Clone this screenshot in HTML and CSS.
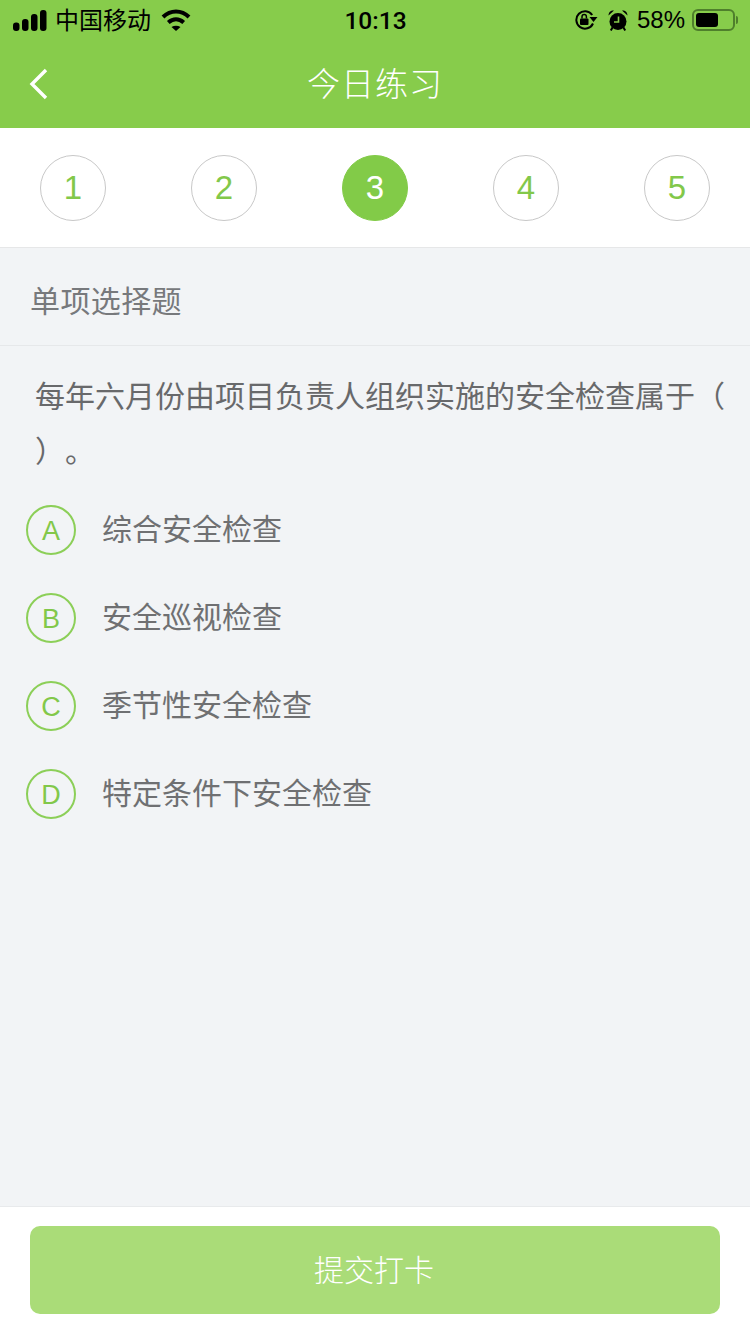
FILE: index.html
```html
<!DOCTYPE html>
<html lang="zh-CN">
<head>
  <meta charset="UTF-8">
  <meta name="viewport" content="width=device-width, initial-scale=1.0">
  <title>今日练习</title>
  <link rel="stylesheet" href="styles.css">
</head>
<body>
  <div class="page">
    <header class="top">
      <div class="status">
        <div class="status-left">
          <svg class="signal" width="34" height="21" viewBox="0 0 34 21">
            <rect x="0" y="12.500" width="6.500" height="8.500" rx="3"/>
            <rect x="9" y="9" width="6.500" height="12" rx="3"/>
            <rect x="18" y="4" width="6.500" height="17" rx="3"/>
            <rect x="27" y="0" width="6.500" height="21" rx="3"/>
          </svg>
          <span class="carrier">中国移动</span>
          <svg class="wifi" width="30" height="22" viewBox="0 0 30 22">
            <path d="M2 8C9.500 .7 20.500 .7 28 8" fill="none" stroke="#000" stroke-width="4"/>
            <path d="M7.300 13.500C12 9.300 18 9.300 22.700 13.500" fill="none" stroke="#000" stroke-width="4"/>
            <path d="M10.500 18c2.800-1.800 6.200-1.800 9 0l-4.500 4z"/>
          </svg>
        </div>
        <span class="time">10:13</span>
        <div class="status-right">
          <svg class="lock" width="23" height="20" viewBox="0 0 23 20">
            <path d="M17.200 5A8.700 8.700 0 1 0 18 13.500" fill="none" stroke="#000" stroke-width="2"/>
            <path d="M14.500 7h8l-4 5z"/>
            <rect x="5" y="8.500" width="8.500" height="6.500" rx="1"/>
            <path d="M7 8.500V6.800a2.200 2.200 0 0 1 4.400 0v1.700" fill="none" stroke="#000" stroke-width="1.500"/>
          </svg>
          <svg class="alarm" width="20" height="21" viewBox="0 0 20 21">
            <circle cx="10" cy="11.500" r="8.500"/>
            <path d="M.5 5.500C.5 2 3 .2 6 .5zM19.500 5.500C19.500 2 17 .2 14 .5z"/>
            <path d="M4.500 17.500 2.800 20.500M15.500 17.500 17.200 20.500" stroke="#000" stroke-width="2"/>
            <path d="M10.500 6.500v5.500H6" fill="none" stroke="#87cc4b" stroke-width="1.600"/>
          </svg>
          <span class="percent">58%</span>
          <div class="battery"><div class="battery-level"></div></div>
          <div class="battery-tip"></div>
        </div>
      </div>
      <nav class="nav">
        <svg class="back" width="20" height="32" viewBox="0 0 20 32">
          <path d="M17 2 3 16l14 14" fill="none" stroke="#fff" stroke-width="3.400"/>
        </svg>
        <h1 class="nav-title">今日练习</h1>
      </nav>
    </header>

    <div class="steps">
      <div class="step">1</div>
      <div class="step">2</div>
      <div class="step step-on">3</div>
      <div class="step">4</div>
      <div class="step">5</div>
    </div>

    <main class="content">
      <div class="kind">单项选择题</div>
      <p class="question">每年六月份由项目负责人组织实施的安全检查属于（ ）。</p>
      <ul class="options">
        <li class="option"><span class="letter">A</span><span class="option-text">综合安全检查</span></li>
        <li class="option"><span class="letter">B</span><span class="option-text">安全巡视检查</span></li>
        <li class="option"><span class="letter">C</span><span class="option-text">季节性安全检查</span></li>
        <li class="option"><span class="letter">D</span><span class="option-text">特定条件下安全检查</span></li>
      </ul>
    </main>

    <footer class="bottom">
      <button class="submit">提交打卡</button>
    </footer>
  </div>
</body>
</html>
```

FILE: styles.css
```css
* {
  box-sizing: border-box;
}

body {
  margin: 0;
  font-family: "Liberation Sans", "Noto Sans CJK SC", sans-serif;
  background-color: #f2f4f6;
}

.page {
  display: flex;
  flex-direction: column;
  width: 750px;
  height: 1334px;
  overflow: hidden;
}

.top {
  height: 128px;
  background-color: #87cc4b;
}

.status {
  display: grid;
  grid-template-columns: 1fr auto 1fr;
  align-items: center;
  height: 40px;
  padding: 0 12px 0 13px;
  color: #000;
}

.status-left,
.status-right {
  display: flex;
  align-items: center;
}

.status-right {
  justify-content: flex-end;
}

.signal {
  margin-right: 8px;
}

.carrier {
  margin-top: -3px;
  margin-right: 10px;
  font-size: 24px;
}

.time {
  font-family: Roboto, "Liberation Sans", sans-serif;
  font-size: 24.500px;
  font-weight: 500;
}

.lock {
  margin-right: 10px;
}

.alarm {
  margin-right: 9px;
}

.percent {
  margin-right: 7px;
  font-size: 24px;
}

.battery {
  width: 43px;
  height: 22px;
  padding: 2px;
  border: 2px solid #4f7f2c;
  border-radius: 6px;
}

.battery-level {
  width: 22px;
  height: 100%;
  background-color: #000;
  border-radius: 3px;
}

.battery-tip {
  width: 2px;
  height: 8px;
  margin-left: 1px;
  background-color: #4f7f2c;
  border-radius: 0 2px 2px 0;
}

.nav {
  position: relative;
  display: flex;
  justify-content: center;
  align-items: center;
  height: 88px;
  padding-bottom: 4px;
}

.back {
  position: absolute;
  left: 29px;
  top: 28px;
}

.nav-title {
  margin: 0;
  font-size: 33px;
  font-weight: 300;
  color: #fff;
  letter-spacing: 1px;
}

.steps {
  display: flex;
  justify-content: space-between;
  align-items: center;
  height: 120px;
  padding: 0 40px;
  background-color: #fff;
  border-bottom: 1px solid #e6e7e8;
}

.step {
  display: flex;
  justify-content: center;
  align-items: center;
  width: 66px;
  height: 66px;
  font-size: 33px;
  color: #82c84a;
  border: 1px solid #c8c8c8;
  border-radius: 50%;
}

.step-on {
  color: #fff;
  background-color: #82cb48;
  border-color: #82cb48;
}

.content {
  flex: 1;
}

.kind {
  height: 98px;
  padding-top: 34px;
  padding-left: 30px;
  font-size: 30px;
  line-height: 40px;
  letter-spacing: 0.4px;
  color: #77797c;
  border-bottom: 1px solid #e6e8ea;
}

.question {
  margin: 23px 0 0;
  padding: 0 20px 0 35px;
  font-size: 30px;
  line-height: 55px;
  color: #68696b;
  text-spacing-trim: space-all;
}

.options {
  list-style: none;
  margin: 7px 0 0;
  padding: 0 0 0 26px;
}

.option {
  display: flex;
  align-items: center;
  height: 88px;
  font-size: 30px;
  color: #6f7072;
}

.letter {
  display: flex;
  justify-content: center;
  align-items: center;
  width: 50px;
  height: 50px;
  margin-right: 27px;
  padding-top: 2px;
  font-size: 27px;
  color: #82c84a;
  border: 2px solid #8ccf58;
  border-radius: 50%;
}

.option-text {
  margin-left: -1px;
  padding-bottom: 6px;
}

.bottom {
  height: 128px;
  padding: 19px 30px 0;
  background-color: #fff;
  border-top: 1px solid #e8eaec;
}

.submit {
  display: block;
  width: 100%;
  height: 88px;
  padding: 0 2px 4px 0;
  font-family: inherit;
  font-size: 30px;
  font-weight: 300;
  color: #fff;
  background-color: #aadc78;
  border: 0;
  border-radius: 10px;
}
```
